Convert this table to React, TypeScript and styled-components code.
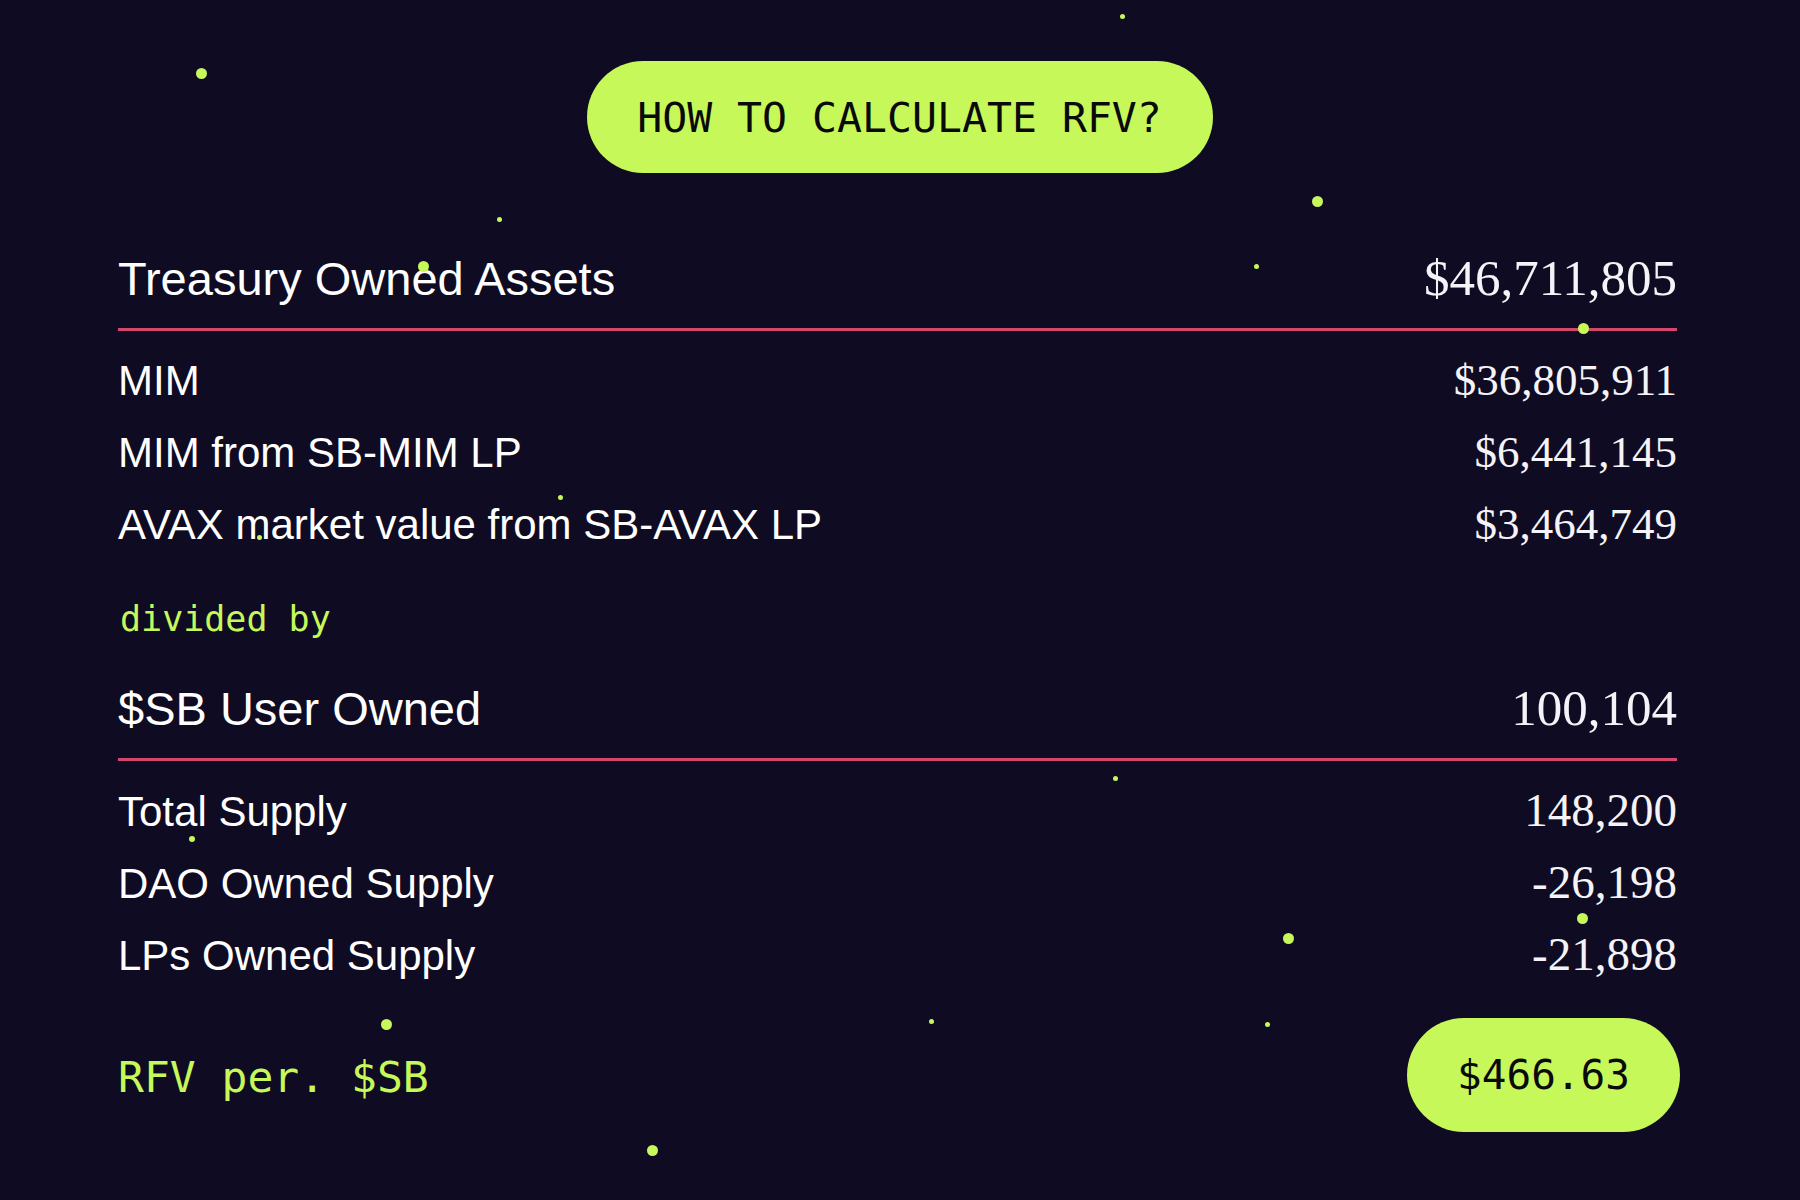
import * as React from 'react';
import styled, { createGlobalStyle } from 'styled-components';

const GlobalStyle = createGlobalStyle`
  html, body {
    margin: 0;
    padding: 0;
    background: #0f0b22;
  }
`;

const GREEN = '#c6f85a';
const PINK = '#d3476d';
const SANS = '"Liberation Sans", Arial, sans-serif';
const SERIF = '"Liberation Serif", "Times New Roman", serif';
const MONO = '"DejaVu Sans Mono", "Liberation Mono", monospace';

const Page = styled.div`
  position: relative;
  min-height: 1200px;
  overflow: hidden;
  background: #0f0b22;
  color: #ffffff;
  padding: 61px 123px 0 118px;
  box-sizing: border-box;
`;

const Top = styled.div`
  display: flex;
  justify-content: center;
  padding-left: 4px;
`;

const CalcButton = styled.button`
  width: 626px;
  height: 112px;
  border: none;
  border-radius: 56px;
  background: ${GREEN};
  color: #0a0a0a;
  font-family: ${MONO};
  font-size: 41.5px;
  cursor: pointer;
  padding: 0;
`;

const Section = styled.section`
  display: flex;
  flex-direction: column;
`;

const HeadRow = styled.div<{ $gap: number }>`
  display: flex;
  justify-content: space-between;
  align-items: baseline;
  margin-top: ${(p) => p.$gap}px;
  padding-bottom: 19px;
  border-bottom: 3px solid ${PINK};
  line-height: 60px;
`;

const HeadLabel = styled.span`
  font-family: ${SANS};
  font-size: 47px;
`;

const HeadValue = styled.span`
  font-family: ${SERIF};
  font-size: 51px;
  color: #f4f3f7;
`;

const List = styled.div`
  display: flex;
  flex-direction: column;
  margin-top: 13px;
`;

const Row = styled.div`
  display: flex;
  justify-content: space-between;
  align-items: baseline;
  height: 72px;
  line-height: 72px;
`;

const RowLabel = styled.span`
  font-family: ${SANS};
  font-size: 42px;
`;

const RowValue = styled.span<{ $size: number }>`
  font-family: ${SERIF};
  font-size: ${(p) => p.$size}px;
  color: #f4f3f7;
`;

const Divider = styled.div`
  font-family: ${MONO};
  font-size: 35px;
  line-height: 40px;
  color: ${GREEN};
  margin-top: 39px;
  padding-left: 2px;
`;

const Footer = styled.div`
  display: flex;
  justify-content: space-between;
  align-items: center;
  margin-top: 28px;
`;

const ResultLabel = styled.span`
  font-family: ${MONO};
  font-size: 43px;
  line-height: 50px;
  color: ${GREEN};
  padding-top: 4px;
`;

const ResultPill = styled.div`
  width: 273px;
  height: 114px;
  border-radius: 57px;
  background: ${GREEN};
  color: #0a0a0a;
  display: flex;
  align-items: center;
  justify-content: center;
  font-family: ${MONO};
  font-size: 41px;
  margin-right: -3px;
`;

const Particles = styled.div`
  position: absolute;
  inset: 0;
  pointer-events: none;
`;

const Dot = styled.span<{ $x: number; $y: number; $d: number }>`
  position: absolute;
  left: ${(p) => p.$x - p.$d / 2}px;
  top: ${(p) => p.$y - p.$d / 2}px;
  width: ${(p) => p.$d}px;
  height: ${(p) => p.$d}px;
  border-radius: 50%;
  background: ${GREEN};
`;

const assets = [
  ['MIM', '$36,805,911'],
  ['MIM from SB-MIM LP', '$6,441,145'],
  ['AVAX market value from SB-AVAX LP', '$3,464,749'],
];

const supply = [
  ['Total Supply', '148,200'],
  ['DAO Owned Supply', '-26,198'],
  ['LPs Owned Supply', '-21,898'],
];

// x, y, diameter
const dots: [number, number, number][] = [
  [1122, 16, 5],
  [201, 73, 11],
  [499, 219, 5],
  [1317, 201, 11],
  [423, 266, 11],
  [1256, 266, 5],
  [1583, 328, 11],
  [560, 497, 5],
  [259, 537, 5],
  [1115, 778, 5],
  [192, 839, 6],
  [1582, 918, 11],
  [1288, 938, 11],
  [386, 1024, 11],
  [931, 1021, 5],
  [1267, 1024, 5],
  [652, 1150, 11],
];

export default function App() {
  return (
    <>
      <GlobalStyle />
      <Page>
        <Top>
          <CalcButton>HOW TO CALCULATE RFV?</CalcButton>
        </Top>

        <Section>
          <HeadRow $gap={75}>
            <HeadLabel>Treasury Owned Assets</HeadLabel>
            <HeadValue>$46,711,805</HeadValue>
          </HeadRow>
          <List>
            {assets.map(([label, value]) => (
              <Row key={label}>
                <RowLabel>{label}</RowLabel>
                <RowValue $size={45}>{value}</RowValue>
              </Row>
            ))}
          </List>
        </Section>

        <Divider>divided by</Divider>

        <Section>
          <HeadRow $gap={39}>
            <HeadLabel>$SB User Owned</HeadLabel>
            <HeadValue>100,104</HeadValue>
          </HeadRow>
          <List>
            {supply.map(([label, value]) => (
              <Row key={label}>
                <RowLabel>{label}</RowLabel>
                <RowValue $size={47}>{value}</RowValue>
              </Row>
            ))}
          </List>
        </Section>

        <Footer>
          <ResultLabel>RFV per. $SB</ResultLabel>
          <ResultPill>$466.63</ResultPill>
        </Footer>

        <Particles>
          {dots.map(([x, y, d], i) => (
            <Dot key={i} $x={x} $y={y} $d={d} />
          ))}
        </Particles>
      </Page>
    </>
  );
}
